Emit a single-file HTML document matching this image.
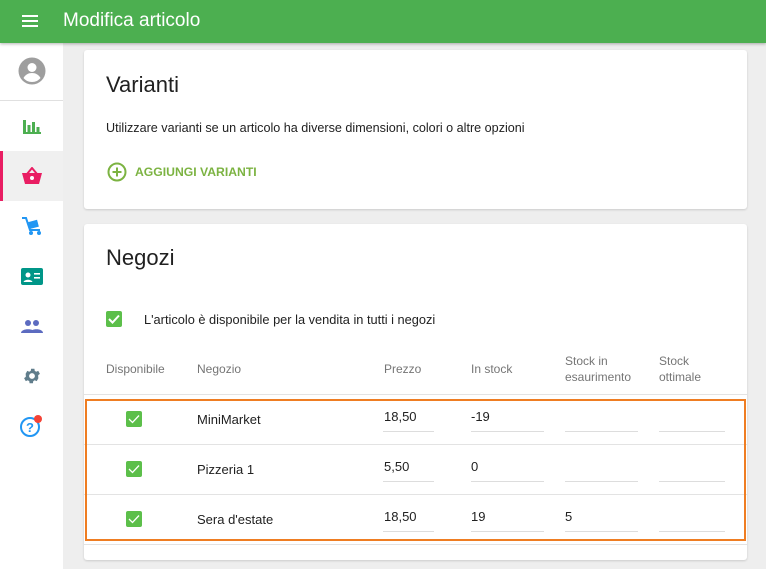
<!DOCTYPE html><html><head><meta charset="utf-8"><style>
*{margin:0;padding:0;box-sizing:border-box}
body{width:766px;height:569px;overflow:hidden;background:#eeeeee;font-family:"Liberation Sans",sans-serif;position:relative;color:#212121}
.hdr{position:absolute;left:0;top:0;width:766px;height:43px;background:#4caf50;box-shadow:0 1px 3px rgba(0,0,0,.3);z-index:2}
.hdr .t{position:absolute;left:63px;top:10px;color:#fff;font-size:19px}
.side{position:absolute;left:0;top:43px;width:63px;height:526px;background:#fff}
.ic{position:absolute;left:0;width:63px;display:flex;justify-content:center;align-items:center;height:50px}
.card{position:absolute;left:84px;width:663px;background:#fff;border-radius:3px;box-shadow:0 1px 2px rgba(0,0,0,.15)}
.h{position:absolute;left:22px;font-size:22px;color:#212121}
.cb{position:absolute;width:16px;height:16px;background:#5cbf4a;border-radius:2px}
.cb svg{position:absolute;left:2px;top:3px}
.th{position:absolute;font-size:12px;color:#757575;line-height:16px}
.td{position:absolute;font-size:13px;color:#212121}
.ul{position:absolute;height:1px;background:#ddd}
.line{position:absolute;left:0;width:663px;height:1px;background:#e3e3e3}
</style></head><body>
<div class="hdr"><svg style="position:absolute;left:22px;top:15px" width="16" height="12"><rect y="0" width="16" height="2" fill="#fff"/><rect y="5" width="16" height="2" fill="#fff"/><rect y="10" width="16" height="2" fill="#fff"/></svg><div class="t">Modifica articolo</div></div>
<div class="side">
<div class="ic" style="top:3px"><svg width="28" height="28" viewBox="0 0 28 28"><circle cx="14" cy="14" r="13.5" fill="#9e9e9e"/><circle cx="14" cy="10.5" r="4.5" fill="#fff"/><path d="M5.5 21c2-3.5 5-5 8.5-5s6.5 1.5 8.5 5c-2 2.5-5 4-8.5 4s-6.5-1.5-8.5-4z" fill="#fff"/></svg></div>
<div style="position:absolute;left:0;top:57px;width:63px;height:1px;background:#e0e0e0"></div>
<div class="ic" style="top:59px"><svg width="20" height="16"><rect x="1" y="1" width="3" height="14" fill="#4caf50"/><rect x="5.5" y="6" width="3" height="9" fill="#4caf50"/><rect x="10" y="3" width="3" height="12" fill="#4caf50"/><rect x="14.5" y="8" width="3" height="7" fill="#4caf50"/><rect x="1" y="13" width="18" height="2" fill="#4caf50"/></svg></div>
<div style="position:absolute;left:0;top:108px;width:63px;height:50px;background:#f0f0f0;border-left:3px solid #e91e63"></div>
<div class="ic" style="top:108px"><svg width="22" height="18" viewBox="0 0 22 18"><path d="M6 7L11 1 16 7" stroke="#e91e63" stroke-width="2" fill="none"/><path d="M1 6h20l-3 11H4z" fill="#e91e63"/><circle cx="11" cy="11" r="2" fill="#fff"/></svg></div>
<div class="ic" style="top:158px"><svg width="22" height="20" viewBox="0 0 22 20"><path d="M1 2h4l4 12h10" stroke="#2196f3" stroke-width="2" fill="none"/><rect x="8" y="5" width="9" height="7" fill="#2196f3" transform="rotate(-15 12 8)"/><circle cx="10" cy="17" r="2" fill="#2196f3"/><circle cx="18" cy="17" r="2" fill="#2196f3"/></svg></div>
<div class="ic" style="top:208px"><svg width="22" height="17"><rect width="22" height="17" rx="2" fill="#009688"/><circle cx="7" cy="7" r="2.5" fill="#fff"/><path d="M2.5 14c1-3 8-3 9 0z" fill="#fff"/><rect x="13" y="5" width="6" height="1.6" fill="#fff"/><rect x="13" y="9" width="6" height="1.6" fill="#fff"/></svg></div>
<div class="ic" style="top:258px"><svg width="22" height="14"><circle cx="7" cy="4" r="3" fill="#5c6bc0"/><circle cx="15" cy="4" r="3" fill="#5c6bc0"/><path d="M0 14c0-5 14-5 14 0z" fill="#5c6bc0"/><path d="M9 14c0-5 13-5 13 0z" fill="#5c6bc0"/></svg></div>
<div class="ic" style="top:308px"><svg width="20" height="20" viewBox="0 0 24 24"><path fill="#607d8b" d="M19.4 13a7.5 7.5 0 000-2l2.1-1.6-2-3.5-2.5 1a7 7 0 00-1.7-1l-.4-2.6h-4l-.4 2.6a7 7 0 00-1.7 1l-2.5-1-2 3.5L4.6 11a7.5 7.5 0 000 2l-2.1 1.6 2 3.5 2.5-1a7 7 0 001.7 1l.4 2.6h4l.4-2.6a7 7 0 001.7-1l2.5 1 2-3.5zM12 15.5a3.5 3.5 0 110-7 3.5 3.5 0 010 7z"/></svg></div>
<div class="ic" style="top:358px"><svg width="26" height="26" viewBox="0 0 26 26"><circle cx="11" cy="14" r="9" fill="none" stroke="#2196f3" stroke-width="2"/><text x="11" y="19" font-size="13" font-weight="bold" fill="#2196f3" text-anchor="middle" font-family="Liberation Sans">?</text><circle cx="19" cy="6" r="4" fill="#f44336"/></svg></div>
</div>
<div class="card" style="top:50px;height:159px">
<div class="h" style="top:22px">Varianti</div>
<div style="position:absolute;left:22px;top:71px;font-size:12.6px">Utilizzare varianti se un articolo ha diverse dimensioni, colori o altre opzioni</div>
<svg style="position:absolute;left:23px;top:112px" width="20" height="20"><circle cx="10" cy="10" r="8.5" fill="none" stroke="#7cb342" stroke-width="2"/><path d="M10 5.5v9M5.5 10h9" stroke="#7cb342" stroke-width="2"/></svg>
<div style="position:absolute;left:51px;top:115px;font-size:12.2px;font-weight:bold;color:#7cb342">AGGIUNGI VARIANTI</div>
</div>
<div class="card" style="top:224px;height:336px">
<div class="h" style="top:21px">Negozi</div>
<div class="cb" style="left:22px;top:87px"><svg width="12" height="10"><path d="M1 5l3.5 3.5L11 1.5" stroke="#fff" stroke-width="2" fill="none"/></svg></div>
<div style="position:absolute;left:60px;top:88px;font-size:12.8px">L'articolo è disponibile per la vendita in tutti i negozi</div>
<div class="th" style="left:22px;top:137px">Disponibile</div>
<div class="th" style="left:113px;top:137px">Negozio</div>
<div class="th" style="left:300px;top:137px">Prezzo</div>
<div class="th" style="left:387px;top:137px">In stock</div>
<div class="th" style="left:481px;top:129px">Stock in<br>esaurimento</div>
<div class="th" style="left:575px;top:129px">Stock<br>ottimale</div>
<div class="line" style="top:170px"></div>
<div class="line" style="top:220px"></div>
<div class="line" style="top:270px"></div>
<div class="line" style="top:320px"></div>
<div style="position:absolute;left:1px;top:175px;width:661px;height:142px;border:2px solid #ef7d22"></div>
<div class="cb" style="left:42px;top:187px"><svg width="12" height="10"><path d="M1 5l3.5 3.5L11 1.5" stroke="#fff" stroke-width="1.3" fill="none"/></svg></div>
<div class="td" style="left:113px;top:188px">MiniMarket</div>
<div class="td" style="left:300px;top:185px">18,50</div><div class="ul" style="left:299px;top:207px;width:51px"></div>
<div class="td" style="left:387px;top:185px">-19</div><div class="ul" style="left:387px;top:207px;width:73px"></div>
<div class="ul" style="left:481px;top:207px;width:73px"></div><div class="ul" style="left:575px;top:207px;width:66px"></div>
<div class="cb" style="left:42px;top:237px"><svg width="12" height="10"><path d="M1 5l3.5 3.5L11 1.5" stroke="#fff" stroke-width="1.3" fill="none"/></svg></div>
<div class="td" style="left:113px;top:238px">Pizzeria 1</div>
<div class="td" style="left:300px;top:235px">5,50</div><div class="ul" style="left:299px;top:257px;width:51px"></div>
<div class="td" style="left:387px;top:235px">0</div><div class="ul" style="left:387px;top:257px;width:73px"></div>
<div class="ul" style="left:481px;top:257px;width:73px"></div><div class="ul" style="left:575px;top:257px;width:66px"></div>
<div class="cb" style="left:42px;top:287px"><svg width="12" height="10"><path d="M1 5l3.5 3.5L11 1.5" stroke="#fff" stroke-width="1.3" fill="none"/></svg></div>
<div class="td" style="left:113px;top:288px">Sera d'estate</div>
<div class="td" style="left:300px;top:285px">18,50</div><div class="ul" style="left:299px;top:307px;width:51px"></div>
<div class="td" style="left:387px;top:285px">19</div><div class="ul" style="left:387px;top:307px;width:73px"></div>
<div class="td" style="left:481px;top:285px">5</div><div class="ul" style="left:481px;top:307px;width:73px"></div><div class="ul" style="left:575px;top:307px;width:66px"></div>
</div>
</body></html>
